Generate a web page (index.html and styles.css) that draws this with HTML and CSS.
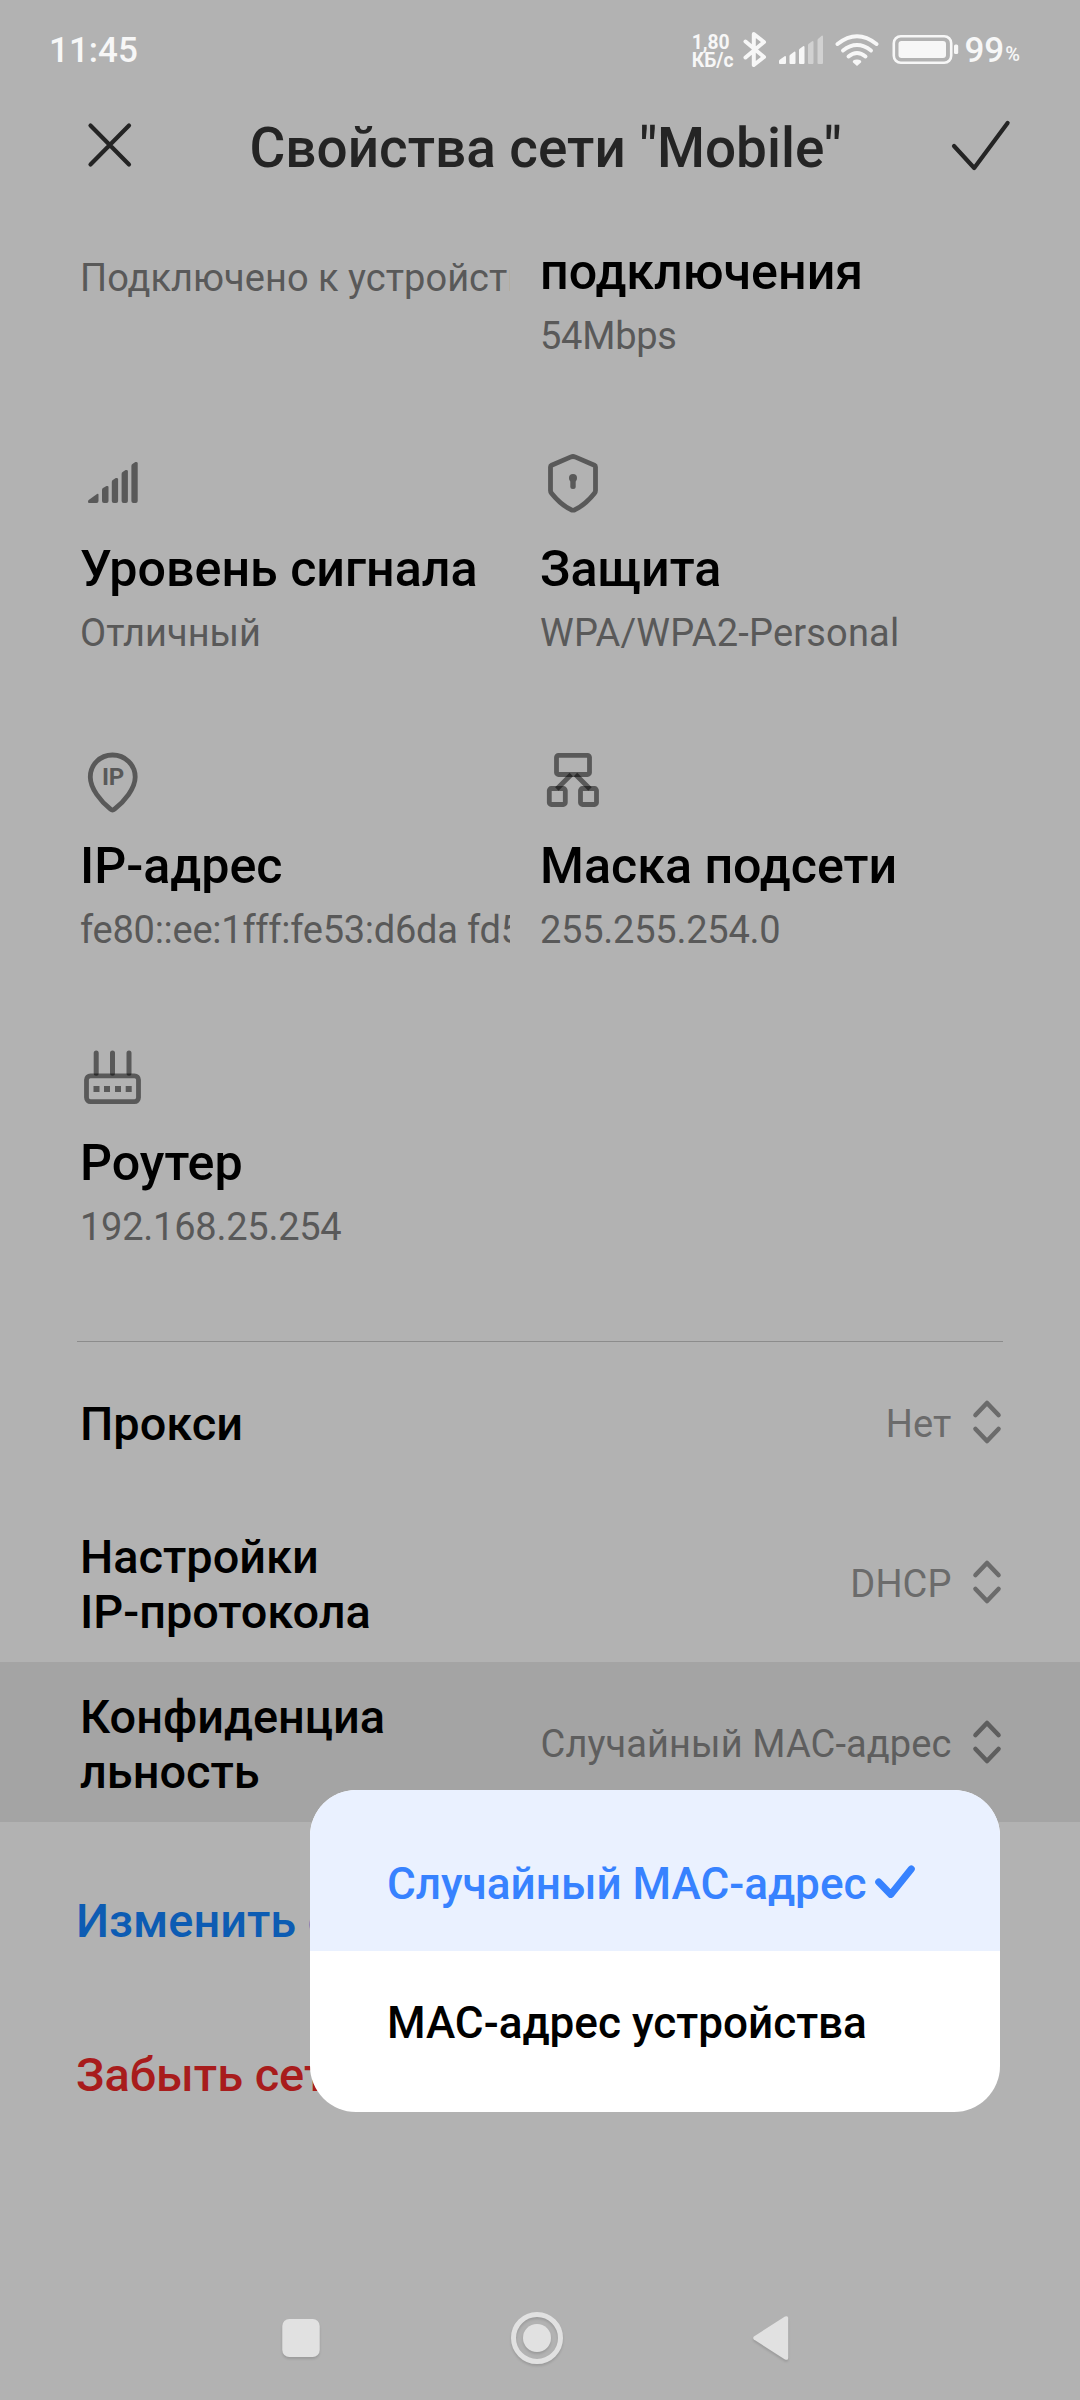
FILE: index.html
```html
<!DOCTYPE html>
<html lang="ru">
<head>
<meta charset="utf-8">
<title>Свойства сети</title>
<link rel="stylesheet" href="styles.css">
</head>
<body>
<div class="screen">
  <div class="statusbar">
    <span class="clock">11:45</span>
    <div class="speed"><span>1,80</span><span>КБ/с</span></div>
    <svg class="status-icons" width="224" height="44" viewBox="740 28 224 44" fill="none">
      <path d="M745.5 41.5 764 57 753.800 65V34L764 42 745.500 57.500" stroke="currentColor" stroke-width="4" stroke-linejoin="round" stroke-linecap="round"/>
      <g fill="currentColor">
        <path d="M779 63v-2q0-1 1-1.500l5-3.500q1 0 1 1v6q0 1-1 1h-5q-1 0-1-1z"/>
        <path d="M789.500 63v-7q0-1 1-1.500l4-3q1 0 1 1V63q0 1-1 1h-4q-1 0-1-1z"/>
        <path d="M799 63V50q0-1 1-1.500l3.500-2.500q1 0 1 1v16q0 1-1 1H800q-1 0-1-1z"/>
        <path opacity=".45" d="M808 63V45q0-1 1-1.500l3.500-2.500q1 0 1 1v21q0 1-1 1H809q-1 0-1-1z"/>
        <path opacity=".45" d="M817.500 63V40q0-1 1-1.500l3.500-3q1 0 1 1V63q0 1-1 1h-3.500q-1 0-1-1z"/>
        <path d="M857 66l-4.200-3.700q-.5-2.800 4.200-2.800t4.200 2.800z"/>
        <rect x="898.500" y="41" width="47.500" height="17" rx="3"/>
        <rect x="954" y="44.500" width="4.200" height="9.500" rx="1.500"/>
      </g>
      <g stroke="currentColor" stroke-width="3.900" stroke-linecap="round">
        <path d="M837.500 44Q857 28.500 876.500 44"/>
        <path d="M843 50.500Q857 39.500 871 50.500"/>
        <path d="M848.500 56.500Q857 49.500 865.500 56.500"/>
      </g>
      <rect x="893.800" y="36.200" width="57.400" height="26.600" rx="7" stroke="currentColor" stroke-width="2.600"/>
    </svg>
    <span class="battery">99</span><span class="percent">%</span>
  </div>

  <header class="header">
    <svg class="close" width="48" height="48" viewBox="86 121 48 48"><path d="M90.500 125.500 129 164.500M129 125.500 90.500 164.500"/></svg>
    <h1 class="title">Свойства сети "Mobile"</h1>
    <svg class="accept" width="62" height="54" viewBox="950 119 62 54"><path d="M954 146 974.200 168 1007.600 123"/></svg>
  </header>

  <section class="facts">
    <div class="fact fact-cut fact-status">
      <p class="value">Подключено к устройству</p>
    </div>
    <div class="fact fact-cut">
      <h2 class="name">подключения</h2>
      <p class="value numeric">54Mbps</p>
    </div>

    <div class="fact">
      <svg class="icon" viewBox="80 450 66 66"><g class="solid">
        <path d="M88 501.500q0-1 1-1.800l8-5.700q1.500-.8 1.500.8v6.200q0 2-2 2h-7.500q-1 0-1-1.500z"/>
        <path d="M102 501v-11q0-1.500 1-2l3.500-2q2-.5 2 1V501q0 2-2 2H104q-2 0-2-2z"/>
        <path d="M111.800 501v-19q0-1.500 1-2l3-2q2-.5 2.300 1V501q0 2-2 2h-2.300q-2 0-2-2z"/>
        <path d="M121.600 501v-27q0-1.500 1-2l3-2q2-.5 2.300 1V501q0 2-2 2h-2.300q-2 0-2-2z"/>
        <path d="M131.400 501v-35q0-1.500 1-2l3-2q2-.5 2.300 1V501q0 2-2 2h-2.300q-2 0-2-2z"/>
      </g></svg>
      <h2 class="name">Уровень сигнала</h2>
      <p class="value">Отличный</p>
    </div>
    <div class="fact">
      <svg class="icon" viewBox="540 450 66 66">
        <path class="line" d="M571 456.900q2-.8 4 0l19.400 8.300q1.100.5 1.100 1.800v23.500q0 1.500-1 2.700-9 11.300-19.500 16.500-2 .9-4 0-10.500-5.200-19.500-16.500-1-1.200-1-2.700V467q0-1.300 1.100-1.800z"/>
        <circle class="solid" cx="573" cy="478" r="4"/><rect class="solid" x="570.300" y="478" width="5.400" height="11" rx="2.500"/>
      </svg>
      <h2 class="name">Защита</h2>
      <p class="value wide">WPA/WPA2-Personal</p>
    </div>

    <div class="fact">
      <svg class="icon" viewBox="80 747 66 66">
        <path class="line" d="M112.500 755c-12.500 0-22.200 9.800-22.200 22 0 11.500 10.500 24.500 20.200 32.100q2 1.600 4 0c9.700-7.600 20.700-20.600 20.700-32.100 0-12.200-10-22-22.700-22z"/>
        <text class="pin-text" x="102" y="785">IP</text>
      </svg>
      <h2 class="name">IP-адрес</h2>
      <p class="value numeric">fe80::ee:1fff:fe53:d6da fd53:8c1a</p>
    </div>
    <div class="fact">
      <svg class="icon" viewBox="540 747 66 66">
        <g class="line"><rect x="556.500" y="755.300" width="33" height="19.200" rx="2"/><rect x="549.300" y="788.500" width="16" height="16" rx="2"/><rect x="580.500" y="788.500" width="16" height="16" rx="2"/></g>
        <path class="link-line" d="M571.300 774.500 556.800 789M575.500 774.500 590 789"/>
      </svg>
      <h2 class="name">Маска подсети</h2>
      <p class="value numeric">255.255.254.0</p>
    </div>

    <div class="fact">
      <svg class="icon" viewBox="80 1044 66 66">
        <rect class="line" x="86.500" y="1075.800" width="52" height="25.800" rx="4"/>
        <path class="antenna" d="M96.200 1053v20.300M112.500 1053v20.300M129 1053v20.300"/>
        <g class="solid"><rect x="93.500" y="1086" width="6" height="6"/><rect x="104" y="1086" width="6" height="6"/><rect x="115" y="1086" width="6" height="6"/><rect x="125.700" y="1086" width="6" height="6"/></g>
      </svg>
      <h2 class="name">Роутер</h2>
      <p class="value numeric">192.168.25.254</p>
    </div>
  </section>

  <hr class="divider">

  <section class="options">
    <div class="option">
      <span class="label">Прокси</span><span class="choice">Нет</span>
      <svg class="arrows" viewBox="0 0 30 46"><path d="M3.500 16 15 4 26.500 16M3.500 30 15 42 26.500 30"/></svg>
    </div>
    <div class="option">
      <span class="label">Настройки<br>IP-протокола</span><span class="choice">DHCP</span>
      <svg class="arrows" viewBox="0 0 30 46"><path d="M3.500 16 15 4 26.500 16M3.500 30 15 42 26.500 30"/></svg>
    </div>
    <div class="option pressed">
      <span class="label">Конфиденциальность</span><span class="choice">Случайный MAC-адрес</span>
      <svg class="arrows" viewBox="0 0 30 46"><path d="M3.500 16 15 4 26.500 16M3.500 30 15 42 26.500 30"/></svg>
    </div>
  </section>

  <section class="actions">
    <div class="action edit">Изменить сеть</div>
    <div class="action forget">Забыть сеть</div>
  </section>

  <nav class="navbar">
    <svg width="38" height="60" viewBox="0 0 38 60"><rect x=".3" y="11" width="37.400" height="38" rx="7"/></svg>
    <svg width="54" height="60" viewBox="0 0 54 60"><circle class="ring" cx="27" cy="30" r="23.500"/><circle cx="27" cy="30" r="14"/></svg>
    <svg width="36" height="60" viewBox="0 0 36 60"><path d="M.9 28.400 32 8.600q3.200-1.200 3.200 1.500v39.800q0 2.700-3.200 1.500L.9 31.600q-1.400-1.600 0-3.200z"/></svg>
  </nav>

  <div class="popup">
    <div class="popup-item selected">Случайный MAC-адрес
      <svg class="tick" width="42" height="36" viewBox="874 1862 42 36"><path d="M878.700 1882 890.800 1894.500 911.300 1869"/></svg>
    </div>
    <div class="popup-item">MAC-адрес устройства</div>
  </div>
</div>
</body>
</html>
```
FILE: styles.css
```css
* { box-sizing: border-box; }
body { margin: 0; font-family: Roboto, "Noto Sans", sans-serif; background: #b2b2b2; }
h1, h2, p { margin: 0; font-weight: 500; }
svg { display: block; flex: none; }

.screen { position: relative; width: 1080px; height: 2400px; overflow: hidden; display: flex; flex-direction: column; color: #000; }

.statusbar { height: 90px; padding: 0 60px 0 49px; display: flex; align-items: flex-start; color: #f7f7f7; }
.clock { margin-top: 30px; font-size: 35px; line-height: 42px; font-weight: 500; }
.speed { margin: 34px 7px 0 auto; display: flex; flex-direction: column; font-size: 19.300px; line-height: 17.500px; font-weight: 700; }
.status-icons { margin-top: 28px; }
.battery { margin-top: 30px; font-size: 35px; line-height: 42px; font-weight: 500; }
.percent { margin: 42px 0 0 1px; font-size: 20px; line-height: 24px; font-weight: 500; }

.header { height: 110px; padding: 0 68px 0 86px; display: flex; align-items: flex-start; justify-content: space-between; color: #242424; }
.title { margin: 28px 0 0 7px; font-size: 54.900px; line-height: 60px; }
.close, .accept { fill: none; stroke: #242424; stroke-width: 4.200; stroke-linecap: round; stroke-linejoin: round; }
.close { margin-top: 31px; }
.accept { margin-top: 29px; }

.facts { flex: none; padding: 0 80px; display: grid; grid-template-columns: 430px 430px; column-gap: 30px; grid-template-rows: 250px 297px 297px 297px; }
.fact { min-width: 0; overflow: hidden; }
.fact-cut { padding-top: 42px; }
.fact-status { padding-top: 55px; }
.icon { width: 66px; height: 66px; margin-bottom: 23px; }
.name { font-size: 50.200px; line-height: 60px; white-space: nowrap; }
.value { font-size: 38px; line-height: 46px; font-weight: 400; letter-spacing: .03px; color: #595959; white-space: nowrap; }
.value.numeric { letter-spacing: -.25px; }
.value.wide { letter-spacing: .18px; }
.name + .value { margin-top: 11px; }
.solid { fill: #595959; }
.line { fill: none; stroke: #595959; stroke-width: 4.800; stroke-linejoin: round; }
.link-line { fill: none; stroke: rgba(0, 0, 0, .5); stroke-width: 4.800; }
.antenna { fill: none; stroke: rgba(0, 0, 0, .5); stroke-width: 5; stroke-linecap: round; }
.pin-text { font-size: 24px; font-weight: 700; letter-spacing: -.3px; fill: #595959; }

.divider { flex: none; width: 926px; height: 1px; margin: 0 77px; border: 0; background: #8c8c8c; }

.option { height: 160px; padding: 0 78.500px 0 80px; display: flex; align-items: center; }
.pressed { background: #a4a4a4; }
.label { width: 320px; padding-top: 3px; font-size: 46.900px; line-height: 55px; font-weight: 500; overflow-wrap: anywhere; }
.choice { margin-left: auto; padding-top: 4px; font-size: 38px; line-height: 46px; letter-spacing: .1px; color: #6b6b6b; white-space: nowrap; }
.arrows { width: 30px; height: 46px; margin-left: 20px; fill: none; stroke: #6b6b6b; stroke-width: 4.600; stroke-linecap: round; stroke-linejoin: round; }
.pressed .choice { color: #5e5e5e; }
.pressed .arrows { stroke: #5e5e5e; }

.actions { padding: 22px 0 0 76px; }
.action { height: 154px; padding-top: 50px; font-size: 46.900px; line-height: 54px; font-weight: 500; }
.edit { color: #0d5cb3; }
.forget { color: #a81c1c; }

.navbar { height: 124px; margin-top: auto; padding: 0 291px 0 282px; display: flex; align-items: center; justify-content: space-between; }
.navbar svg { fill: #e1e1e1; overflow: visible; filter: drop-shadow(0 2px 1px rgba(0, 0, 0, .13)); }
.navbar .ring { fill: none; stroke: #e1e1e1; stroke-width: 5; }

.popup { position: absolute; left: 310px; top: 1790px; width: 690px; height: 322px; border-radius: 46px; overflow: hidden; background: #fff; display: grid; grid-template-rows: 161px 161px; }
.popup-item { display: flex; padding: 67px 0 0 77px; font-size: 44.100px; line-height: 54px; font-weight: 500; white-space: nowrap; }
.popup-item:last-child { padding-top: 45px; }
.selected { background: #eaf1ff; color: #3782ff; }
.tick { margin: 5px 0 0 7px; fill: none; stroke: #3782ff; stroke-width: 7; stroke-linecap: round; stroke-linejoin: round; }
```
